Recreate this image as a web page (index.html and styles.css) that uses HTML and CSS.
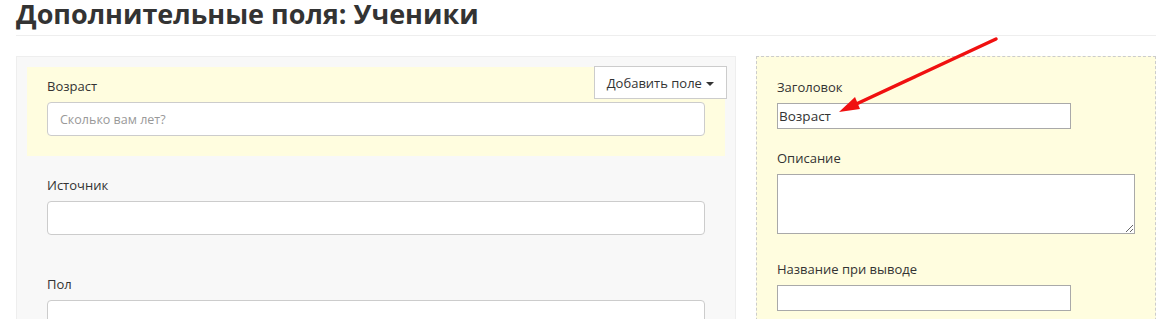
FILE: index.html
```html
<!DOCTYPE html>
<html lang="ru">
<head>
    <meta charset="UTF-8">
    <title>Дополнительные поля: Ученики</title>
    <link rel="stylesheet" href="styles.css">
</head>
<body>
    <div class="page">
        <h1 class="page-title">Дополнительные поля: Ученики</h1>

        <div class="editor">
            <div class="fields-list">
                <div class="field field-active">
                    <label class="field-label">Возраст</label>
                    <input class="field-input" type="text" placeholder="Сколько вам лет?">
                    <button class="add-btn">Добавить поле <span class="caret"></span></button>
                </div>
                <div class="field">
                    <label class="field-label">Источник</label>
                    <input class="field-input" type="text">
                </div>
                <div class="field">
                    <label class="field-label">Пол</label>
                    <input class="field-input" type="text">
                </div>
            </div>

            <div class="field-settings">
                <div class="setting">
                    <label class="field-label">Заголовок</label>
                    <input class="plain-input" type="text" value="Возраст">
                </div>
                <div class="setting setting-wide">
                    <label class="field-label">Описание</label>
                    <textarea class="plain-textarea"></textarea>
                </div>
                <div class="setting">
                    <label class="field-label">Название при выводе</label>
                    <input class="plain-input" type="text">
                </div>
            </div>
        </div>
    </div>

    <svg class="pointer-arrow" width="1163" height="319" viewBox="0 0 1163 319">
        <line x1="996" y1="39" x2="852" y2="106" stroke="#f01010" stroke-width="3.5" stroke-linecap="round"/>
        <polygon points="839,112 860,109 855,97" fill="#f01010"/>
    </svg>
</body>
</html>
```

FILE: styles.css
```css
body {
    margin: 0;
    font-family: 'Open Sans', sans-serif;
    color: #333;
    background: #fff;
    position: relative;
    overflow: hidden;
}
.page {
    padding: 0 7px 0 16px;
}
.page-title {
    margin: 0 0 20px;
    padding: 0 0 7px;
    font-size: 27px;
    line-height: 28px;
    font-weight: 700;
    color: #333;
    border-bottom: 1px solid #eee;
}
.editor {
    display: flex;
    align-items: flex-start;
    gap: 20px;
}
.fields-list {
    width: 720px;
    box-sizing: border-box;
    background: #f8f8f8;
    border: 1px solid #eee;
    padding: 10px;
    display: flex;
    flex-direction: column;
    gap: 10px;
}
.field {
    position: relative;
    padding: 9px 20px 20px;
}
.field-active {
    background: #fffddf;
}
.field-label {
    display: block;
    font-size: 13px;
    line-height: 20px;
    margin-bottom: 6px;
    color: #333;
}
.field-input {
    display: block;
    width: 100%;
    height: 34px;
    box-sizing: border-box;
    border: 1px solid #ccc;
    border-radius: 4px;
    background: #fff;
    padding: 0 12px;
    font-family: 'Open Sans', sans-serif;
    font-size: 12.5px;
    color: #555;
}
.field-input::placeholder {
    color: #999;
}
.add-btn {
    position: absolute;
    top: -1px;
    right: -2px;
    width: 133px;
    height: 33px;
    background: #fff;
    border: 1px solid #ccc;
    border-radius: 0;
    font-family: 'Open Sans', sans-serif;
    font-size: 13px;
    color: #333;
    padding: 0;
    cursor: pointer;
}
.caret {
    display: inline-block;
    width: 0;
    height: 0;
    margin-left: 1px;
    vertical-align: middle;
    border-top: 4px solid #333;
    border-left: 4px solid transparent;
    border-right: 4px solid transparent;
}
.field-settings {
    width: 400px;
    height: 300px;
    box-sizing: border-box;
    background: #fffddf;
    border: 1px dashed #ccc;
    padding: 20px 20px 0;
}
.setting {
    margin-bottom: 19px;
}
.setting-wide {
    margin-bottom: 25px;
}
.plain-input {
    display: block;
    width: 294px;
    height: 26px;
    box-sizing: border-box;
    border: 1px solid #a9a9a9;
    padding: 0 1px;
    font-family: 'Open Sans', sans-serif;
    font-size: 13.5px;
    color: #333;
    background: #fff;
}
.plain-textarea {
    display: block;
    width: 358px;
    height: 60px;
    box-sizing: border-box;
    border: 1px solid #a9a9a9;
    background: #fff;
    margin: 0;
}
.pointer-arrow {
    position: absolute;
    left: 0;
    top: 0;
    pointer-events: none;
}
```
